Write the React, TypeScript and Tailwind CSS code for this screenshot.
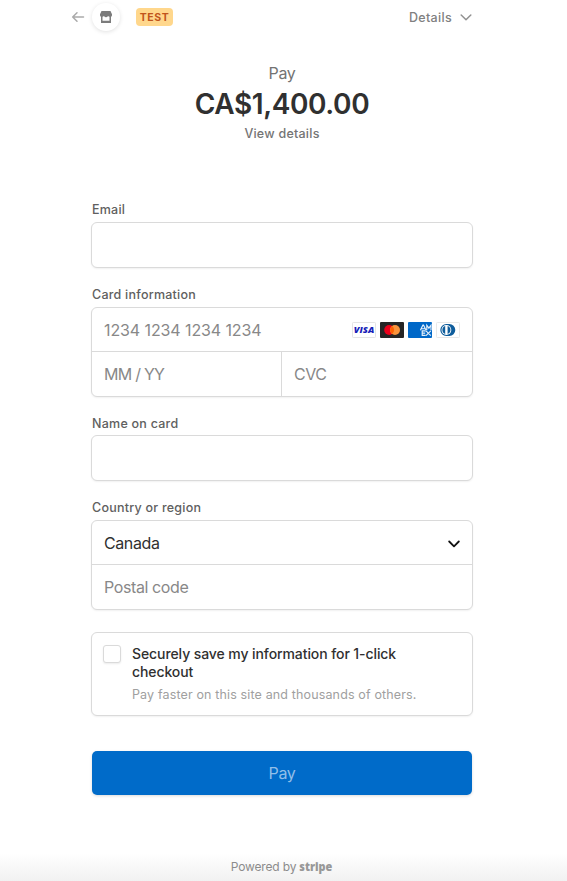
import type { ReactNode } from "react";

const panel =
  "rounded-[6px] border border-[#dadada] bg-white shadow-[0_1px_2px_rgba(0,0,0,0.06)]";

function Field({ label, className, children }: { label: string; className: string; children: ReactNode }) {
  return (
    <section className={className}>
      <div className="pl-px text-[12.5px] leading-[15px] font-medium tracking-[0.24px] whitespace-nowrap text-[#606060]">
        {label}
      </div>
      {children}
    </section>
  );
}

function Visa() {
  return (
    <svg width="24" height="16" viewBox="0 0 24 16">
      <rect x="0.5" y="0.5" width="23" height="15" rx="0.8" fill="#fff" stroke="#e4e4e4" />
      <text x="1.8" y="11.3" fontFamily="Open Sans, sans-serif" fontSize="9" fontWeight="800" fontStyle="italic" fill="#171eb8" textLength="20.4" lengthAdjust="spacingAndGlyphs">
        VISA
      </text>
    </svg>
  );
}

function Mastercard() {
  return (
    <svg width="24" height="16" viewBox="0 0 24 16">
      <rect width="24" height="16" rx="1" fill="#252525" />
      <circle cx="9.2" cy="8" r="5" fill="#eb001b" />
      <circle cx="15" cy="8" r="5" fill="#f9933b" />
      <path d="M12.1 4a5 5 0 0 1 0 8a5 5 0 0 1 0-8" fill="#ff5f00" />
    </svg>
  );
}

function Amex() {
  return (
    <svg width="24" height="16" viewBox="0 0 24 16">
      <rect width="24" height="16" rx="1" fill="#0068c8" />
      <g fill="none" stroke="#fff" strokeOpacity="0.9" strokeWidth="1.15">
        <path d="M12.4 8.2L14.9 3h.6L18 8.2M13.4 6.7h3.6M18.8 8.2V3.2l2.1 3 2.1-3v5" />
        <path d="M17.6 8.8h-3.4v4.6h3.4M14.2 11.1h3M18 8.8l4.8 4.8M22.8 8.8L18 13.6" />
      </g>
    </svg>
  );
}

function Diners() {
  return (
    <svg width="24" height="16" viewBox="0 0 24 16">
      <rect x="0.5" y="0.5" width="23" height="15" rx="0.8" fill="#fff" stroke="#e8e8e8" />
      <path d="M10.3 2h3a6 6 0 0 1 0 12h-3a6 6 0 0 1 0-12" fill="#0f5d9c" />
      <circle cx="10.4" cy="8" r="4.9" fill="#fff" />
      <path d="M9.2 4.1a4.1 4.1 0 0 0 0 7.8ZM11.6 4.1a4.1 4.1 0 0 1 0 7.8Z" fill="#0f5d9c" />
    </svg>
  );
}

export default function App() {
  return (
    <main className="flex h-[881px] w-[567px] flex-col overflow-hidden bg-white font-['Inter',sans-serif] text-[#303030]">
      <header className="flex h-[34px] items-center pl-[71px]">
        <svg width="14" height="12" viewBox="0 0 14 12" fill="none" stroke="#aaa" strokeWidth="1.5" strokeLinecap="round" strokeLinejoin="round">
          <path d="M12.5 6H2M6 1.7L1.7 6 6 10.3" />
        </svg>
        <span className="ml-[7px] flex size-7 items-center justify-center rounded-full bg-white shadow-[0_1px_4px_rgba(0,0,0,0.12)]">
          <svg width="12" height="12" viewBox="0 0 12 12" fill="#7c7c7c">
            <path fillRule="evenodd" d="M1.5 0h9l1.5 3.3v.9a1.8 1.8 0 0 1-1 1.5V12H1V5.7a1.8 1.8 0 0 1-1-1.5v-.9ZM2.5 5.8v4h7v-4a2.2 2.2 0 0 1-1.4-.7 2.8 2.8 0 0 1-4.2 0 2.2 2.2 0 0 1-1.4.7Z" />
          </svg>
        </span>
        <span className="ml-4 flex h-[18px] w-[37px] items-center justify-center rounded-[4px] bg-[#ffd78c] pt-px text-[10.5px] font-bold tracking-[0.6px] text-[#c0541c]">
          TEST
        </span>
        <span className="mt-0.5 ml-[236px] flex items-center text-[12.5px] leading-4 font-medium tracking-[0.3px] whitespace-nowrap text-[#808080]">
          Details
          <svg width="12" height="8" viewBox="0 0 12 8" className="ml-2" fill="none" stroke="#929292" strokeWidth="1.5" strokeLinecap="round" strokeLinejoin="round">
            <path d="M1.2 1L6 5.8 10.8 1" />
          </svg>
        </span>
      </header>

      <div className="mr-[3px] flex h-[168px] flex-col items-center pt-[29px]">
        <div className="text-[16px] leading-5 tracking-[-0.3px] text-[#737373]">Pay</div>
        <div className="mt-[3px] text-[28px] leading-9 font-semibold tracking-[-0.4px] whitespace-nowrap">CA$1,400.00</div>
        <div className="mt-1 text-[12.5px] leading-4 font-medium tracking-[0.24px] whitespace-nowrap text-[#747474]">View details</div>
      </div>

      <form className="ml-[91px] flex w-[382px] flex-col">
        <Field label="Email" className="flex h-[66px] flex-col justify-between">
          <div className={`h-[46px] ${panel}`} />
        </Field>

        <Field label="Card information" className="mt-[19px] flex h-[110px] flex-col justify-between">
          <div className={`grid h-[90px] grid-cols-2 grid-rows-[44px_44px] text-[16px] text-[#888] ${panel}`}>
            <div className="col-span-2 flex items-center justify-between border-b border-[#dadada] pr-3 pl-3">
              <span className="tracking-[-0.1px] whitespace-nowrap">1234 1234 1234 1234</span>
              <span className="flex gap-1">
                <Visa />
                <Mastercard />
                <Amex />
                <Diners />
              </span>
            </div>
            <div className="flex items-center border-r border-[#dadada] pl-3 tracking-[-0.75px]">MM / YY</div>
            <div className="flex items-center pl-3 tracking-[-0.5px]">CVC</div>
          </div>
        </Field>

        <Field label="Name on card" className="mt-[19px] flex h-[65px] flex-col justify-between">
          <div className={`h-[46px] ${panel}`} />
        </Field>

        <Field label="Country or region" className="mt-[19px] flex h-[110px] flex-col justify-between">
          <div className={`grid h-[90px] grid-rows-[44px_44px] text-[16px] tracking-[-0.4px] ${panel}`}>
            <div className="flex items-center justify-between border-b border-[#dadada] pr-3 pl-3">
              Canada
              <svg width="12" height="8" viewBox="0 0 12 8" className="mt-0.5" fill="none" stroke="#111" strokeWidth="1.8" strokeLinecap="round" strokeLinejoin="round">
                <path d="M1.2 1.5L6 6.3 10.8 1.5" />
              </svg>
            </div>
            <div className="flex items-center pl-3 text-[#888]">Postal code</div>
          </div>
        </Field>

        <div className={`mt-[22px] flex h-[84px] pt-3 pl-[11px] ${panel}`}>
          <span className="size-[18px] shrink-0 rounded-[3px] border border-[#dadada] bg-white shadow-[0_1px_2px_rgba(0,0,0,0.08)]" />
          <div className="ml-[11px]">
            <div className="text-[14px] leading-[18px] font-medium tracking-[-0.09px] whitespace-nowrap">
              Securely save my information for 1-click
              <br />
              checkout
            </div>
            <div className="mt-1.5 text-[12.5px] leading-4 tracking-[0.14px] whitespace-nowrap text-[#a0a0a0]">
              Pay faster on this site and thousands of others.
            </div>
          </div>
        </div>

        <button type="button" className="mx-px mt-[35px] h-11 rounded-[5px] bg-[#006bc9] text-[16px] tracking-[-0.3px] text-[#93bfe8] shadow-[0_1px_3px_rgba(0,0,0,0.15)]">
          Pay
        </button>
      </form>

      <footer className="mt-auto flex h-[28px] items-start justify-center bg-linear-to-b from-white to-[#f1f1f1] pt-[6px] pr-[3px] text-[12px] leading-4 text-[#8c8c8c]">
        <span className="tracking-[-0.15px] whitespace-nowrap">Powered by</span>
        <svg width="34" height="20" viewBox="0 0 34 20" className="ml-[3px] overflow-visible">
          <text x="0.3" y="11.5" fontFamily="Open Sans, sans-serif" fontSize="13" fontWeight="800" fill="#989898" textLength="33" lengthAdjust="spacingAndGlyphs">
            stripe
          </text>
        </svg>
      </footer>
    </main>
  );
}
